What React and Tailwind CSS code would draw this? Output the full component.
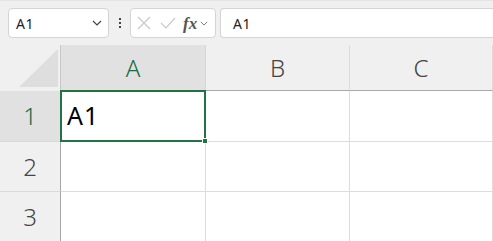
const cols = ["A", "B", "C"];
const rows = [1, 2, 3];

const Chevron = ({ className }) => (
  <svg className={className} viewBox="0 0 10 6" fill="none" stroke="currentColor" strokeWidth="1.2">
    <path d="M1 1l4 4 4-4" />
  </svg>
);

const App = () => {
  return (
    <div className="w-[493px] h-[241px] overflow-hidden bg-[#f0f0f0] font-['Noto_Sans',sans-serif] select-none">
      {/* formula bar */}
      <div className="h-[45px] flex items-start pt-[7px] pl-2 border-t border-[#e4e4e4]">
        <div className="w-[101px] h-[30px] bg-white border border-[#d4d4d4] rounded-[4px] flex items-center justify-between pl-[7px] pr-[6px]">
          <span className="text-[14px] text-[#222] tracking-[0.5px]">A1</span>
          <Chevron className="w-[10px] h-[6px] text-[#444]" />
        </div>
        <div className="w-[21px] h-[30px] flex flex-col items-center justify-center gap-[2px]">
          <span className="w-[2px] h-[2px] bg-[#444]" />
          <span className="w-[2px] h-[2px] bg-[#444]" />
          <span className="w-[2px] h-[2px] bg-[#444]" />
        </div>
        <div className="w-[86px] h-[30px] bg-white border border-[#d4d4d4] rounded-[4px] flex items-center pl-[6px]">
          <svg className="w-[14px] h-[14px] text-[#c8c8c8]" viewBox="0 0 14 14" fill="none" stroke="currentColor" strokeWidth="1.2">
            <path d="M1 1l12 12M13 1L1 13" />
          </svg>
          <svg className="w-[16px] h-[12px] ml-[9px] text-[#c8c8c8]" viewBox="0 0 16 12" fill="none" stroke="currentColor" strokeWidth="1.2">
            <path d="M1 6l5 5L15 1" />
          </svg>
          <span className="ml-[7px] text-[17px] italic font-semibold text-[#555] font-['Liberation_Serif',serif] leading-none">fx</span>
          <Chevron className="ml-[3px] w-[8px] h-[5px] text-[#777]" />
        </div>
        <div className="ml-[4px] flex-1 h-[30px] bg-white border border-r-0 border-[#d4d4d4] rounded-l-[4px] flex items-center pl-[12px]">
          <span className="text-[14px] text-[#222] tracking-[0.5px]">A1</span>
        </div>
      </div>

      {/* grid */}
      <div className="grid grid-cols-[61px_145px_144px_143px] grid-rows-[46px_51px_50px_50px] font-light">
        <div className="relative bg-[#f0f0f0] border-r border-[#c8c8c8]">
          <svg className="absolute left-[19px] top-[4px]" width="40" height="38" viewBox="0 0 40 38">
            <path d="M39 0V38H0Z" fill="#dedede" />
          </svg>
        </div>
        {cols.map((c, i) => (
          <div
            key={c}
            className={`flex items-center justify-center text-[24px] border-b border-[#a8a8a8] ${
              i === 0 ? "bg-[#e1e1e1] text-[#1d6b44] border-r border-r-[#d6d6d6]" : "bg-[#f0f0f0] text-[#444] border-r border-r-[#dcdcdc]"
            }`}
          >
            {c}
          </div>
        ))}
        {rows.map((r) => (
          <>
            <div
              key={`h${r}`}
              className={`flex items-center justify-center text-[24px] border-r border-[#a8a8a8] border-b border-b-[#dadada] ${
                r === 1 ? "bg-[#e1e1e1] text-[#1d6b44]" : "bg-[#f0f0f0] text-[#444]"
              }`}
            >
              {r}
            </div>
            {cols.map((c, i) => (
              <div
                key={`${c}${r}`}
                className={`relative bg-white border-b border-r border-[#dcdcdc] ${
                  r === 1 && i === 0 ? "z-10" : ""
                }`}
              >
                {r === 1 && i === 0 && (
                  <div className="absolute -left-[1px] -top-[1px] -right-[1px] -bottom-[1px] border-2 border-[#217346] flex items-center pl-[5px]">
                    <span className="text-[25px] font-normal text-black tracking-[1px]">A1</span>
                    <span className="absolute -right-[4px] -bottom-[4px] w-[6px] h-[6px] bg-[#217346] border border-white" />
                  </div>
                )}
              </div>
            ))}
          </>
        ))}
      </div>
    </div>
  );
};

export default App;
